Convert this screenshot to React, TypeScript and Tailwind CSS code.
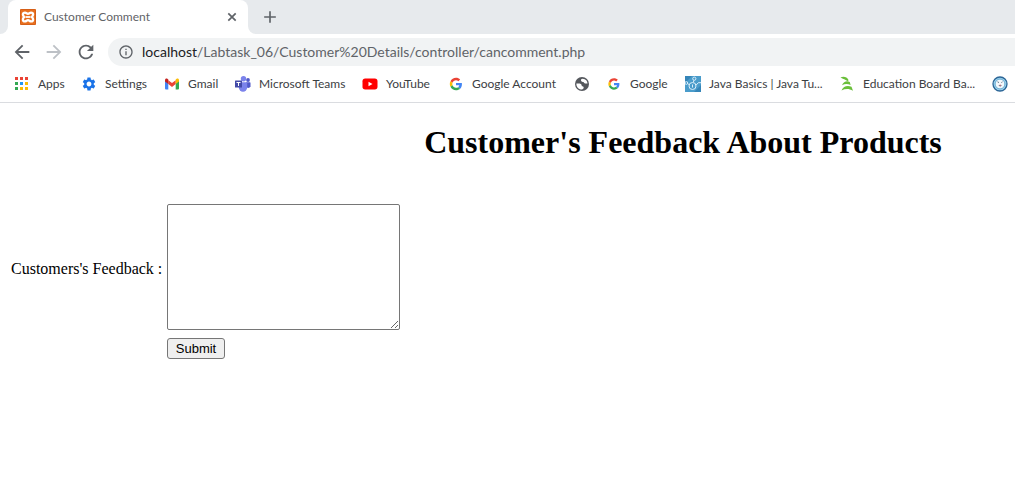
import React from "react";
import { MdAdd, MdArrowBack, MdArrowForward, MdInfoOutline, MdRefresh, MdSettings } from "react-icons/md";

function XamppIcon() {
  return (
    <svg viewBox="0 0 16 16" className="size-4 shrink-0" aria-hidden="true">
      <rect width="16" height="16" rx="1" fill="#e8701f" />
      <rect x="0.5" y="0.5" width="15" height="15" rx="1" fill="none" stroke="#d55f18" />
      <path
        d="M5 3.600c-1.300 0-2.100.9-2.100 2 0 1 .5 1.500 1.200 2.400-.7.9-1.200 1.400-1.200 2.400 0 1.100.8 2 2.100 2 1.400 0 1.700-1.200 3-1.200s1.600 1.200 3 1.200c1.300 0 2.100-.9 2.100-2 0-1-.5-1.500-1.200-2.400.7-.9 1.200-1.400 1.200-2.400 0-1.100-.8-2-2.100-2-1.400 0-1.700 1.200-3 1.200s-1.600-1.200-3-1.200z"
        fill="none"
        stroke="#fff"
        strokeWidth="2.300"
      />
      <path d="M5.500 8h5" stroke="#fff" strokeWidth="1.800" />
    </svg>
  );
}

function CloseIcon() {
  return (
    <svg viewBox="0 0 16 16" className="size-4" aria-hidden="true">
      <path d="M4.300 4.300l7.400 7.400M11.700 4.300l-7.400 7.400" stroke="currentColor" strokeWidth="1.700" />
    </svg>
  );
}

function AppsIcon() {
  const colors = ["#ea4335", "#ea4335", "#ea4335", "#34a853", "#2196f3", "#fbbc04", "#34a853", "#fbbc04", "#fbbc04"];
  return (
    <svg viewBox="0 0 16 16" className="size-4 shrink-0" aria-hidden="true">
      {colors.map((c, i) => (
        <rect key={i} x={1 + (i % 3) * 5} y={1 + Math.floor(i / 3) * 5} width="3" height="3" fill={c} />
      ))}
    </svg>
  );
}

function GmailIcon() {
  return (
    <svg viewBox="0 0 16 16" className="size-4 shrink-0" aria-hidden="true">
      <path d="M1 4.500 4.300 7v6.500H2a1 1 0 0 1-1-1z" fill="#4285f4" />
      <path d="M15 4.500 11.700 7v6.500H14a1 1 0 0 0 1-1z" fill="#34a853" />
      <path d="M4.300 4.300 8 7.100l3.700-2.800v3.800L8 10.900 4.300 8.100z" fill="#ea4335" />
      <path d="M1 4.200C1 2.700 2.600 2.200 3.600 3l.7.6v4.500L1 5.600z" fill="#c5221f" />
      <path d="M15 4.200c0-1.500-1.600-2-2.600-1.200l-.7.6v4.500L15 5.600z" fill="#fbbc04" />
    </svg>
  );
}

function TeamsIcon() {
  return (
    <svg viewBox="0 0 16 16" className="size-4 shrink-0" aria-hidden="true">
      <circle cx="13" cy="4" r="1.900" fill="#5059c9" />
      <path d="M11 6.300h3.800c.4 0 .7.300.7.700v3.600a2.500 2.500 0 0 1-4.500 0z" fill="#5059c9" />
      <circle cx="8.500" cy="2.800" r="2.700" fill="#7b83eb" />
      <path d="M4.500 6.300h7c.4 0 .7.300.7.700v4.600a4.200 4.200 0 0 1-8.400 0V7c0-.4.300-.7.700-.7z" fill="#7b83eb" />
      <rect y="4.500" width="7" height="7" rx="0.500" fill="#434aa8" />
      <path d="M1.500 6.500h4M3.500 6.500V10" stroke="#fff" strokeWidth="1" />
    </svg>
  );
}

function YouTubeIcon() {
  return (
    <svg viewBox="0 0 16 16" className="size-4 shrink-0" aria-hidden="true">
      <rect x="0.500" y="2.500" width="15" height="11" rx="2.700" fill="#f00" />
      <path d="M6.500 5.700 10.500 8l-4 2.300z" fill="#fff" />
    </svg>
  );
}

function GoogleG({ small = false }: { small?: boolean }) {
  return (
    <svg viewBox={small ? "-10 -10 68 68" : "-7 -7 62 62"} className="size-4 shrink-0" aria-hidden="true">
      <path fill="#ea4335" d="M24 9.500c3.540 0 6.710 1.220 9.210 3.600l6.850-6.850C35.900 2.380 30.470 0 24 0 14.620 0 6.510 5.380 2.560 13.220l7.980 6.190C12.430 13.720 17.740 9.500 24 9.500z" />
      <path fill="#4285f4" d="M46.980 24.550c0-1.570-.15-3.090-.38-4.550H24v9.020h12.940c-.58 2.960-2.260 5.480-4.780 7.180l7.730 6c4.510-4.180 7.090-10.360 7.090-17.650z" />
      <path fill="#fbbc05" d="M10.530 28.590c-.48-1.450-.76-2.990-.76-4.590s.27-3.140.76-4.590l-7.980-6.190C.92 16.460 0 20.120 0 24c0 3.880.92 7.540 2.560 10.780l7.970-6.190z" />
      <path fill="#34a853" d="M24 48c6.480 0 11.930-2.130 15.890-5.810l-7.730-6c-2.150 1.450-4.920 2.300-8.160 2.300-6.260 0-11.570-4.220-13.470-9.910l-7.980 6.190C6.510 42.620 14.620 48 24 48z" />
    </svg>
  );
}

function GlobeIcon() {
  return (
    <svg viewBox="0 0 16 16" className="size-4 shrink-0" aria-hidden="true">
      <circle cx="8" cy="8" r="7" fill="#55585d" />
      <path d="M8.600 2.700c-1.600.2-2 1.300-1.400 2.300.5.900 1.400.8 2.200 1.100.9.400.7 1.500 1.800 1.500h2.300c.1-2.300-1.800-4.800-4.900-4.900z" fill="#fff" />
      <path d="M2.400 7.500c1.500.3 3.300-.2 4.500.6 1 .7.300 1.800 1.400 2.200 1 .3 1.600.6 1.300 1.700-.3 1-1.300 1.600-2.600 1.500-2.800-.4-4.800-3-4.600-6z" fill="#fff" />
    </svg>
  );
}

function JavaIcon() {
  return (
    <svg viewBox="0 0 16 16" className="size-4 shrink-0" aria-hidden="true">
      <rect width="16" height="16" fill="#4a9ccb" />
      <path d="M0 0h7L0 7zM16 9v7H9z" fill="#3585b8" />
      <g fill="none" stroke="#d9eefa" strokeWidth="1">
        <circle cx="7.500" cy="10" r="3.500" />
        <circle cx="9.300" cy="2.700" r="1.600" />
        <circle cx="1.300" cy="7" r="1.400" />
        <path d="M8.900 4.300 8.300 6.400M2.600 7.600 4.200 8.700M11 9.200l2.300-2.500H16" />
        <path d="M7.500 8.500v3" />
      </g>
    </svg>
  );
}

function EducationIcon() {
  return (
    <svg viewBox="0 0 16 16" className="size-4 shrink-0" aria-hidden="true">
      <g fill="#6abf3a">
        <path d="M1.500 1.500C4.500.2 8 .8 9.500 4L9 5.300C7 4 5 3.300 1.500 1.500z" />
        <path d="M3 9.300C4.500 5.500 8 4.500 10.800 6l.8 3C8.500 7.500 5.500 7.800 3 9.300z" />
        <path d="M2.500 14.500c1.700-4.300 6-5.500 10-3.700l1.500 4c-4-2.200-7.500-2.200-11.500-.3z" />
      </g>
    </svg>
  );
}

function SealIcon() {
  return (
    <svg viewBox="0 0 16 16" className="size-4 shrink-0" aria-hidden="true">
      <circle cx="8" cy="8" r="7" fill="#9ed4ee" stroke="#2b6596" strokeWidth="1.300" />
      <circle cx="8" cy="8" r="4.900" fill="#f2f8fc" stroke="#4b9bc9" strokeWidth="0.800" />
      <path d="M5.500 5.800 7 6.600M10.300 5.700 9.500 6.800M7 9c.6 1.600 1.700 1.600 2.300 0" fill="none" stroke="#56677c" strokeWidth="0.900" />
      <circle cx="8.200" cy="9.200" r="0.700" fill="#c65f6b" />
    </svg>
  );
}

const bookmarks: { label?: string; name?: string; icon: React.ReactNode }[] = [
  { label: "Apps", icon: <AppsIcon /> },
  { label: "Settings", icon: <MdSettings className="size-4 shrink-0 text-[#1a73e8]" /> },
  { label: "Gmail", icon: <GmailIcon /> },
  { label: "Microsoft Teams", icon: <TeamsIcon /> },
  { label: "YouTube", icon: <YouTubeIcon /> },
  { label: "Google Account", icon: <GoogleG /> },
  { name: "Website", icon: <GlobeIcon /> },
  { label: "Google", icon: <GoogleG small /> },
  { label: "Java Basics | Java Tu...", icon: <JavaIcon /> },
  { label: "Education Board Ba...", icon: <EducationIcon /> },
  { name: "University", icon: <SealIcon /> },
];

function TabStrip() {
  return (
    <div className="flex h-[34px] bg-[#e7eaed]">
      <span className="w-2 bg-white">
        <span className="block h-full rounded-br-lg bg-[#e7eaed]" />
      </span>
      <div className="flex w-60 items-center gap-2 rounded-t-lg bg-white px-3 text-[#5f6368]">
        <XamppIcon />
        <span className="flex-1 text-xs">Customer Comment</span>
        <button type="button" aria-label="Close tab" className="-mr-1">
          <CloseIcon />
        </button>
      </div>
      <span className="w-2 bg-white">
        <span className="block h-full rounded-bl-lg bg-[#e7eaed]" />
      </span>
      <button type="button" aria-label="New tab" className="ml-1 flex items-center text-[#5f6368]">
        <MdAdd className="size-5" />
      </button>
    </div>
  );
}

function Toolbar() {
  return (
    <div className="flex items-center pt-1 pl-[11px] text-[#5f6368]">
      <div className="flex items-center gap-[10px] pr-[11px]">
        <button type="button" aria-label="Back">
          <MdArrowBack className="size-[22px]" />
        </button>
        <button type="button" aria-label="Forward" className="text-[#bdc1c6]">
          <MdArrowForward className="size-[22px]" />
        </button>
        <button type="button" aria-label="Reload">
          <MdRefresh className="size-[22px]" />
        </button>
      </div>
      <div className="flex h-7 min-w-0 flex-1 items-center gap-2 rounded-l-full bg-[#f1f3f4] pl-[10px]">
        <MdInfoOutline className="size-4 shrink-0" />
        <span className="truncate text-sm">
          <span className="text-[#202124]">localhost</span>/Labtask_06/Customer%20Details/controller/cancomment.php
        </span>
      </div>
    </div>
  );
}

function BookmarksBar() {
  return (
    <nav aria-label="Bookmarks" className="overflow-hidden border-b border-[#dadce0]">
      <ul className="grid h-9 grid-cols-[67px_83px_71px_127px_86px_126px_32px_79px_154px_153px_16px] items-center pl-[14px]">
        {bookmarks.map((b, i) => (
          <li key={i}>
            <a href="#" aria-label={b.name} className="flex items-center gap-2 text-xs whitespace-nowrap text-[#3c4043]">
              {b.icon}
              {b.label}
            </a>
          </li>
        ))}
      </ul>
    </nav>
  );
}

export default function App() {
  return (
    <div className="min-h-screen bg-white">
      <header className="font-['Lato','Open_Sans',sans-serif]">
        <TabStrip />
        <Toolbar />
        <BookmarksBar />
      </header>
      <main className="font-['Liberation_Serif',serif] text-black">
        <h1 className="pt-5 pl-[351px] text-center text-[32px] leading-[38px] font-bold whitespace-nowrap">
          Customer's Feedback About Products
        </h1>
        <form className="mt-[43px] pl-[11px]" onSubmit={(e) => e.preventDefault()}>
          <div className="grid grid-cols-[152px_1fr] items-center gap-x-1 gap-y-2">
            <label htmlFor="feedback" className="pt-1 text-base whitespace-nowrap">
              Customers's Feedback :
            </label>
            <textarea
              id="feedback"
              className="block h-[126px] w-[233px] resize rounded-[2px] border border-[#767676] bg-white p-[2px] font-mono text-[13px]"
            />
            <button
              type="submit"
              className="col-start-2 h-[21px] w-[58px] justify-self-start rounded-[3px] border border-[#767676] bg-[#efefef] font-['Liberation_Sans',sans-serif] text-[13px] leading-4"
            >
              Submit
            </button>
          </div>
        </form>
      </main>
    </div>
  );
}
